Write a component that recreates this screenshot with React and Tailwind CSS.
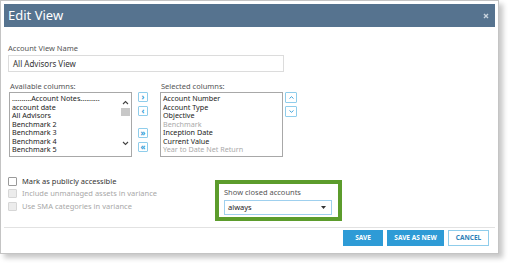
import React from "react";

const font = { fontFamily: '"Noto Sans", "Open Sans", sans-serif' };

const available = [
  "..........Account Notes..........",
  "account date",
  "All Advisors",
  "Benchmark 2",
  "Benchmark 3",
  "Benchmark 4",
  "Benchmark 5",
  "Benchmark 6",
];

const selected = [
  { name: "Account Number" },
  { name: "Account Type" },
  { name: "Objective" },
  { name: "Benchmark", off: true },
  { name: "Inception Date" },
  { name: "Current Value" },
  { name: "Year to Date Net Return", off: true },
];

function MoveButton({ children }) {
  return (
    <div className="w-[10px] h-[10px] border border-[#8fcdeb] rounded-[1px] bg-white flex items-center justify-center text-[8px] leading-none text-[#2e9bd6] font-bold pb-[1px]">
      {children}
    </div>
  );
}

function Check({ label, disabled }) {
  return (
    <div className="flex items-center gap-[5px] h-[12.5px]">
      <div
        className={`w-[9px] h-[9px] border rounded-[1px] ${
          disabled ? "border-[#d6d6d6] bg-[#ececec]" : "border-[#9a9a9a] bg-white"
        }`}
      />
      <span className={`text-[7.5px] ${disabled ? "text-[#a8a8a8]" : "text-[#333]"}`}>{label}</span>
    </div>
  );
}

export default function App() {
  return (
    <div className="w-[510px] h-[264px] bg-white overflow-hidden" style={font}>
      <div className="w-[499px] h-[254px] border border-[#c4c4c4] bg-white p-[3px] flex flex-col shadow-[4px_4px_5px_rgba(0,0,0,0.22)]">
        <div className="h-[23px] bg-[#56738f] flex items-center justify-between pl-[4px] pr-[6px] shrink-0">
          <span className="text-white text-[13px] leading-none">Edit View</span>
          <svg width="6" height="6" viewBox="0 0 6 6">
            <path d="M1 1 L5 5 M5 1 L1 5" stroke="#c9d4de" strokeWidth="1.4" />
          </svg>
        </div>

        <div className="flex-1 px-[4px] pt-[16px] text-[#333]">
          <div className="text-[7.5px] leading-[10px] text-[#555]">Account View Name</div>
          <div className="mt-[2px] w-[276px] h-[17px] border border-[#dcdcdc] flex items-center pl-[4px] text-[8px] text-[#333]">
            All Advisors View
          </div>

          <div className="flex mt-[9px]">
            <div className="flex flex-col">
              <div className="text-[7.5px] leading-[10px] text-[#555] pl-[2px]">Available columns:</div>
              <div className="mt-[1px] ml-[1px] w-[123px] h-[65px] border border-[#a8a8a8] flex overflow-hidden">
                <div className="flex-1 pl-[2px] pt-[1px] text-[7.2px] leading-[8.5px] text-[#222] whitespace-nowrap overflow-hidden">
                  {available.map((a) => (
                    <div key={a}>{a}</div>
                  ))}
                </div>
                <div className="w-[11px] flex flex-col items-center pt-[7px]">
                  <svg width="7" height="5" viewBox="0 0 7 5">
                    <path d="M1 4 L3.5 1.5 L6 4" stroke="#444" strokeWidth="1.1" fill="none" />
                  </svg>
                  <div className="mt-[3px] w-[9px] h-[8px] bg-[#c8c8c8]" />
                  <svg className="mt-[25px]" width="7" height="5" viewBox="0 0 7 5">
                    <path d="M1 1 L3.5 3.5 L6 1" stroke="#444" strokeWidth="1.1" fill="none" />
                  </svg>
                </div>
              </div>
            </div>

            <div className="flex flex-col ml-[6px] mt-[11px] gap-[4px]">
              <MoveButton>›</MoveButton>
              <MoveButton>‹</MoveButton>
              <div className="h-[4px]" />
              <MoveButton>»</MoveButton>
              <MoveButton>«</MoveButton>
            </div>

            <div className="flex flex-col ml-[12px]">
              <div className="text-[7.5px] leading-[10px] text-[#555] pl-[1px]">Selected columns:</div>
              <div className="mt-[1px] w-[123px] h-[65px] border border-[#a8a8a8] pl-[2px] pt-[1px] text-[7.2px] leading-[8.5px] whitespace-nowrap overflow-hidden">
                {selected.map((s) => (
                  <div key={s.name} className={s.off ? "text-[#aaa]" : "text-[#222]"}>
                    {s.name}
                  </div>
                ))}
              </div>
            </div>

            <div className="flex flex-col ml-[2px] mt-[11px] gap-[3px]">
              <div className="w-[12px] h-[11px] border border-[#8fcdeb] rounded-[1px] bg-white flex items-center justify-center">
                <svg width="5" height="3" viewBox="0 0 5 3">
                  <path d="M0.5 2.5 L2.5 0.7 L4.5 2.5" stroke="#2e9bd6" strokeWidth="0.9" fill="none" />
                </svg>
              </div>
              <div className="w-[12px] h-[11px] border border-[#8fcdeb] rounded-[1px] bg-white flex items-center justify-center">
                <svg width="5" height="3" viewBox="0 0 5 3">
                  <path d="M0.5 0.5 L2.5 2.3 L4.5 0.5" stroke="#2e9bd6" strokeWidth="0.9" fill="none" />
                </svg>
              </div>
            </div>
          </div>

          <div className="flex mt-[17px]">
            <div className="w-[207px] flex flex-col pt-[1px]">
              <Check label="Mark as publicly accessible" />
              <Check label="Include unmanaged assets in variance" disabled />
              <Check label="Use SMA categories in variance" disabled />
            </div>
            <div className="mt-[6px] w-[127px] h-[41px] border-4 border-[#5c9c2c] bg-white px-[5px] pt-[3px]">
              <div className="text-[7.5px] leading-[10px] text-[#555]">Show closed accounts</div>
              <div className="mt-[3px] w-[108px] h-[15px] border border-[#9fd0ee] flex items-center justify-between pl-[3px] pr-[5px] text-[7.5px] text-[#222]">
                <span>always</span>
                <svg width="5" height="3" viewBox="0 0 5 3">
                  <path d="M0 0 L5 0 L2.5 3 Z" fill="#333" />
                </svg>
              </div>
            </div>
          </div>
        </div>

        <div className="border-t border-[#e2e2e2] h-[23px] flex items-start justify-end pt-[2px] pr-[6px] gap-[4px] shrink-0">
          <div className="w-[40px] h-[16px] bg-[#2e9bd6] text-white text-[6.5px] font-bold flex items-center justify-center">
            SAVE
          </div>
          <div className="w-[57px] h-[16px] bg-[#2e9bd6] text-white text-[6.5px] font-bold flex items-center justify-center">
            SAVE AS NEW
          </div>
          <div className="w-[41px] h-[16px] bg-white border border-[#8fcdeb] text-[#2e7fb8] text-[6.5px] font-bold flex items-center justify-center">
            CANCEL
          </div>
        </div>
      </div>
    </div>
  );
}
